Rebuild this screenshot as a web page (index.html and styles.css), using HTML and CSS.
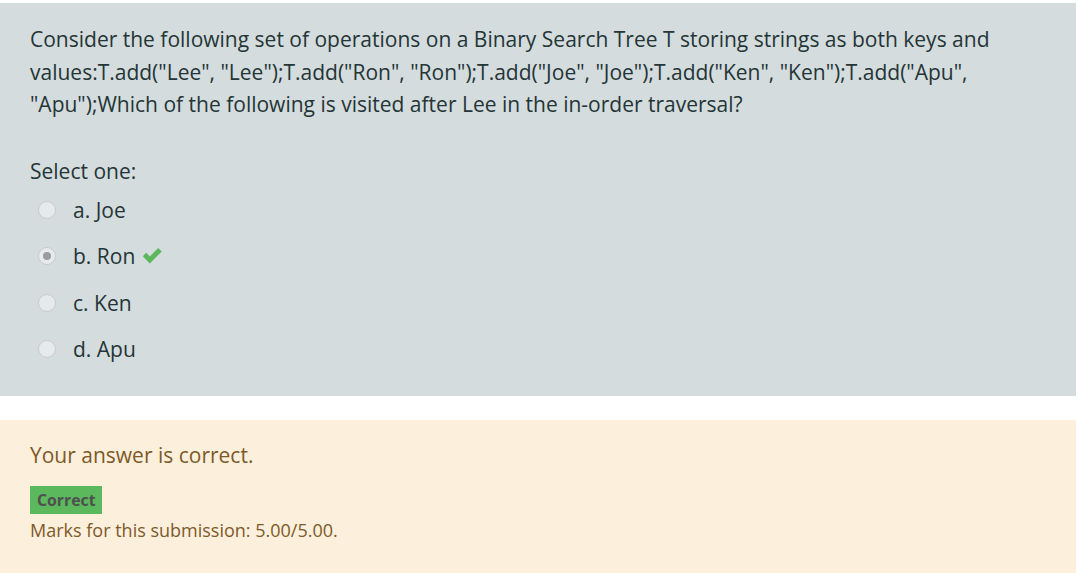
FILE: index.html
```html
<!DOCTYPE html>
<html>
<head>
<meta charset="utf-8">
<link rel="stylesheet" href="styles.css">
</head>
<body>
<div class="formulation">
  <div class="qtext">Consider the following set of operations on a Binary Search Tree T storing strings as both keys and values:T.add("Lee", "Lee");T.add("Ron", "Ron");T.add("Joe", "Joe");T.add("Ken", "Ken");T.add("Apu", "Apu");Which of the following is visited after Lee in the in-order traversal?</div>
  <div class="prompt">Select one:</div>
  <div class="answers">
    <div class="option"><span class="radio"></span><span class="label">a. Joe</span></div>
    <div class="option"><span class="radio checked"></span><span class="label">b. Ron</span>
      <svg class="tick" width="21" height="16" viewBox="0 0 21 16"><path d="M0.8 8.2 L4.2 4.8 L7.8 8.4 L16.2 0 L19.8 3.4 L7.8 15.4 Z" fill="#5cb85c"/></svg>
    </div>
    <div class="option"><span class="radio"></span><span class="label">c. Ken</span></div>
    <div class="option"><span class="radio"></span><span class="label">d. Apu</span></div>
  </div>
</div>
<div class="outcome">
  <div class="feedback">Your answer is correct.</div>
  <div class="badge">Correct</div>
  <div class="marks">Marks for this submission: 5.00/5.00.</div>
</div>
</body>
</html>
```
FILE: styles.css
```css
html, body {
  margin: 0;
  padding: 0;
  background: #ffffff;
}
body {
  font-family: "Open Sans", "Noto Sans", sans-serif;
  padding-top: 3px;
}
.formulation {
  background: #d4dcde;
  color: #243536;
  padding: 20px 30px 24px 30px;
  height: 349px;
  box-sizing: content-box;
}
.qtext {
  font-size: 21px;
  line-height: 32.5px;
}
.prompt {
  font-size: 21px;
  line-height: 32px;
  margin-top: 34px;
}
.answers {
  margin-top: 0;
  display: flex;
  flex-direction: column;
}
.option {
  display: flex;
  align-items: center;
  height: 46.5px;
  font-size: 21px;
}
.radio {
  width: 16px;
  height: 16px;
  border-radius: 50%;
  border: 1px solid #c6cbcb;
  background: #e6eaea;
  margin-left: 8px;
  margin-right: 17px;
  display: flex;
  align-items: center;
  justify-content: center;
  box-sizing: content-box;
}
.radio.checked::after {
  content: "";
  width: 8px;
  height: 8px;
  border-radius: 50%;
  background: #9a9c9c;
}
.tick {
  margin-left: 7px;
}
.outcome {
  margin-top: 24px;
  background: #fcefdc;
  color: #7d5a29;
  padding: 22px 30px 0 30px;
  height: 131px;
}
.feedback {
  font-size: 21px;
  line-height: 26px;
}
.badge {
  display: inline-block;
  margin-top: 18px;
  background: #5cb85c;
  color: #4f4f4f;
  font-weight: 700;
  font-size: 15.8px;
  line-height: 28px;
  padding: 0 6px 0 7px;
}
.marks {
  font-size: 18px;
  line-height: 24px;
  margin-top: 4px;
}
```
